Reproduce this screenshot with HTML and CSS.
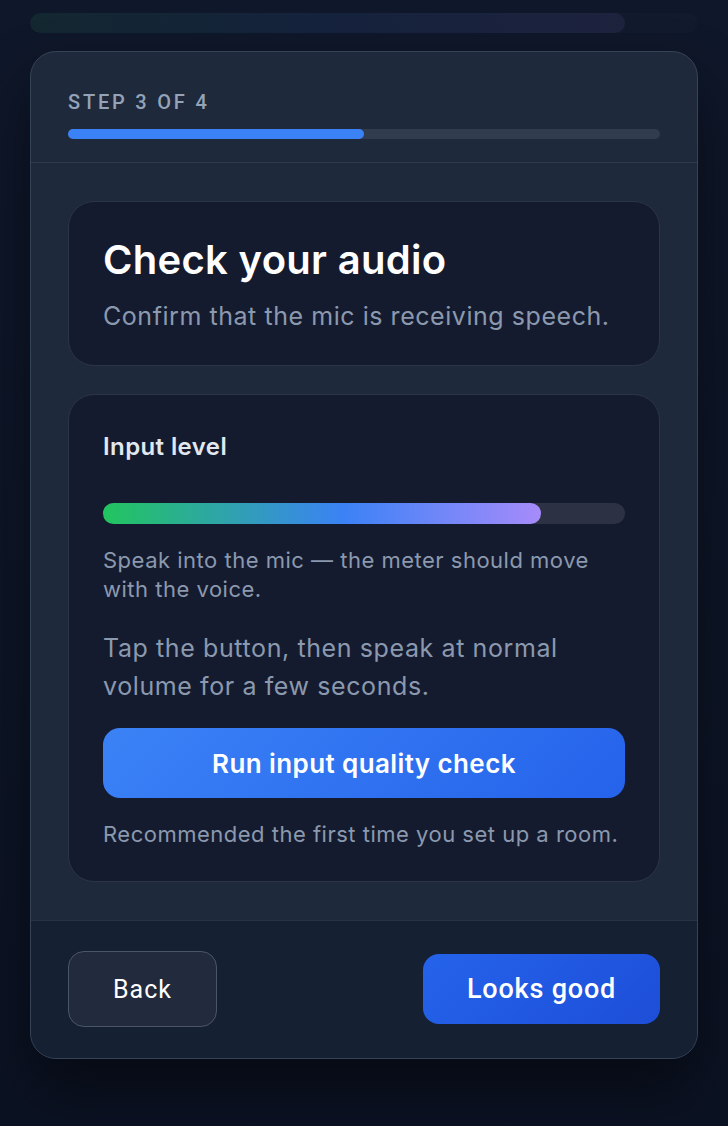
FILE: index.html
```html
<!DOCTYPE html>
<html lang="en">
<head>
    <meta charset="UTF-8">
    <meta name="viewport" content="width=device-width, initial-scale=1.0">
    <title>Audio setup</title>
    <link rel="stylesheet" href="styles.css">
</head>
<body>
    <div class="page">
        <div class="glow-bar">
            <div class="glow-fill"></div>
        </div>

        <div class="wizard">
            <div class="wizard-header">
                <div class="step-label">Step 3 of 4</div>
                <div class="step-track">
                    <div class="step-fill" style="width: 50%;"></div>
                </div>
            </div>

            <div class="wizard-body">
                <div class="panel intro">
                    <h1>Check your audio</h1>
                    <p class="subtitle">Confirm that the mic is receiving speech.</p>
                </div>

                <div class="panel meter-panel">
                    <div class="meter-label">Input level</div>
                    <div class="meter-track">
                        <div class="meter-fill" style="width: 84%;"></div>
                    </div>
                    <p class="hint">Speak into the mic — the meter should move with the voice.</p>
                    <p class="instructions">Tap the button, then speak at normal volume for a few seconds.</p>
                    <button class="check-btn">Run input quality check</button>
                    <p class="hint note">Recommended the first time you set up a room.</p>
                </div>
            </div>

            <div class="wizard-footer">
                <button class="back-btn">Back</button>
                <button class="next-btn">Looks good</button>
            </div>
        </div>
    </div>
</body>
</html>
```

FILE: styles.css
```css
/* Audio check wizard */
body {
    margin: 0;
    padding: 0;
    background-color: #0e1629;
    font-family: Inter, "Noto Sans", sans-serif;
    color: #f8fafc;
}

.page {
    padding: 13px 30px 68px;
    min-height: 1126px;
    box-sizing: border-box;
    background: linear-gradient(180deg, #0f172a 0%, #0d1526 60%, #0b1222 100%);
}

.glow-bar {
    height: 20px;
    border-radius: 10px;
    background-color: rgba(255, 255, 255, 0.015);
    overflow: hidden;
}

.glow-fill {
    width: 89%;
    height: 100%;
    border-radius: 10px;
    background: linear-gradient(90deg, #22c55e, #3b82f6, #a78bfa);
    opacity: 0.08;
}

.wizard {
    margin-top: 18px;
    border: 1px solid #364357;
    border-radius: 26px;
    background-color: #1e293b;
    overflow: hidden;
    box-shadow: 0 30px 60px rgba(0, 0, 0, 0.45);
}

.wizard-header {
    padding: 39px 37px 23px;
    border-bottom: 1px solid #2e3a4e;
}

.step-label {
    font-family: Roboto, sans-serif;
    font-weight: 500;
    font-size: 20px;
    line-height: 22px;
    letter-spacing: 2.8px;
    text-transform: uppercase;
    color: #94a3b8;
}

.step-track {
    margin-top: 16px;
    height: 10px;
    border-radius: 5px;
    background-color: #323c4f;
}

.step-fill {
    height: 100%;
    border-radius: 5px;
    background-color: #3b82f6;
}

.wizard-body {
    padding: 38px 37px;
    display: flex;
    flex-direction: column;
    gap: 28px;
}

.panel {
    background-color: #151b2f;
    border: 1px solid #2a3548;
    border-radius: 26px;
    padding: 35px 34px 31px;
}

.panel h1 {
    margin: 0;
    font-size: 40px;
    line-height: 46px;
    font-weight: 600;
    letter-spacing: 0.3px;
    color: #ffffff;
}

.subtitle {
    margin: 16px 0 0;
    font-size: 25px;
    line-height: 35px;
    letter-spacing: 0.55px;
    color: #8b99ae;
}

.meter-panel {
    padding-top: 37px;
    padding-bottom: 32px;
}

.meter-label {
    font-size: 24px;
    line-height: 30px;
    font-weight: 600;
    letter-spacing: 0.4px;
    color: #e2e8f0;
}

.meter-track {
    margin-top: 41px;
    height: 21px;
    border-radius: 11px;
    background-color: #2c3244;
}

.meter-fill {
    height: 100%;
    border-radius: 11px;
    background: linear-gradient(90deg, #22c55e 0%, #3b82f6 55%, #a78bfa 100%);
}

.hint {
    margin: 22px 0 0;
    font-size: 22px;
    line-height: 29px;
    letter-spacing: 0.5px;
    color: #8b99ae;
}

.instructions {
    margin: 25px 0 0;
    font-size: 25px;
    line-height: 38px;
    letter-spacing: 0.6px;
    color: #8b99ae;
}

.check-btn {
    display: block;
    width: 100%;
    height: 70px;
    margin-top: 23px;
    border: none;
    border-radius: 17px;
    background: linear-gradient(135deg, #3b82f6, #2563eb);
    color: #ffffff;
    font-family: Inter, sans-serif;
    font-size: 26px;
    font-weight: 600;
    letter-spacing: 0.4px;
    cursor: pointer;
}

.note {
    margin-top: 22px;
}

.wizard-footer {
    padding: 30px 37px 31px;
    background-color: #162033;
    border-top: 1px solid #273245;
    display: flex;
    align-items: center;
    justify-content: space-between;
}

.back-btn {
    width: 149px;
    height: 76px;
    border: 1.5px solid #4a5568;
    border-radius: 16px;
    background-color: #222b3d;
    color: #ffffff;
    font-family: Roboto, sans-serif;
    font-size: 25px;
    letter-spacing: 1px;
    cursor: pointer;
}

.next-btn {
    width: 237px;
    height: 70px;
    border: none;
    border-radius: 16px;
    background: linear-gradient(135deg, #2563eb, #1d4ed8);
    color: #ffffff;
    font-family: Roboto, sans-serif;
    font-size: 27px;
    font-weight: 500;
    letter-spacing: 0.8px;
    cursor: pointer;
}
```
